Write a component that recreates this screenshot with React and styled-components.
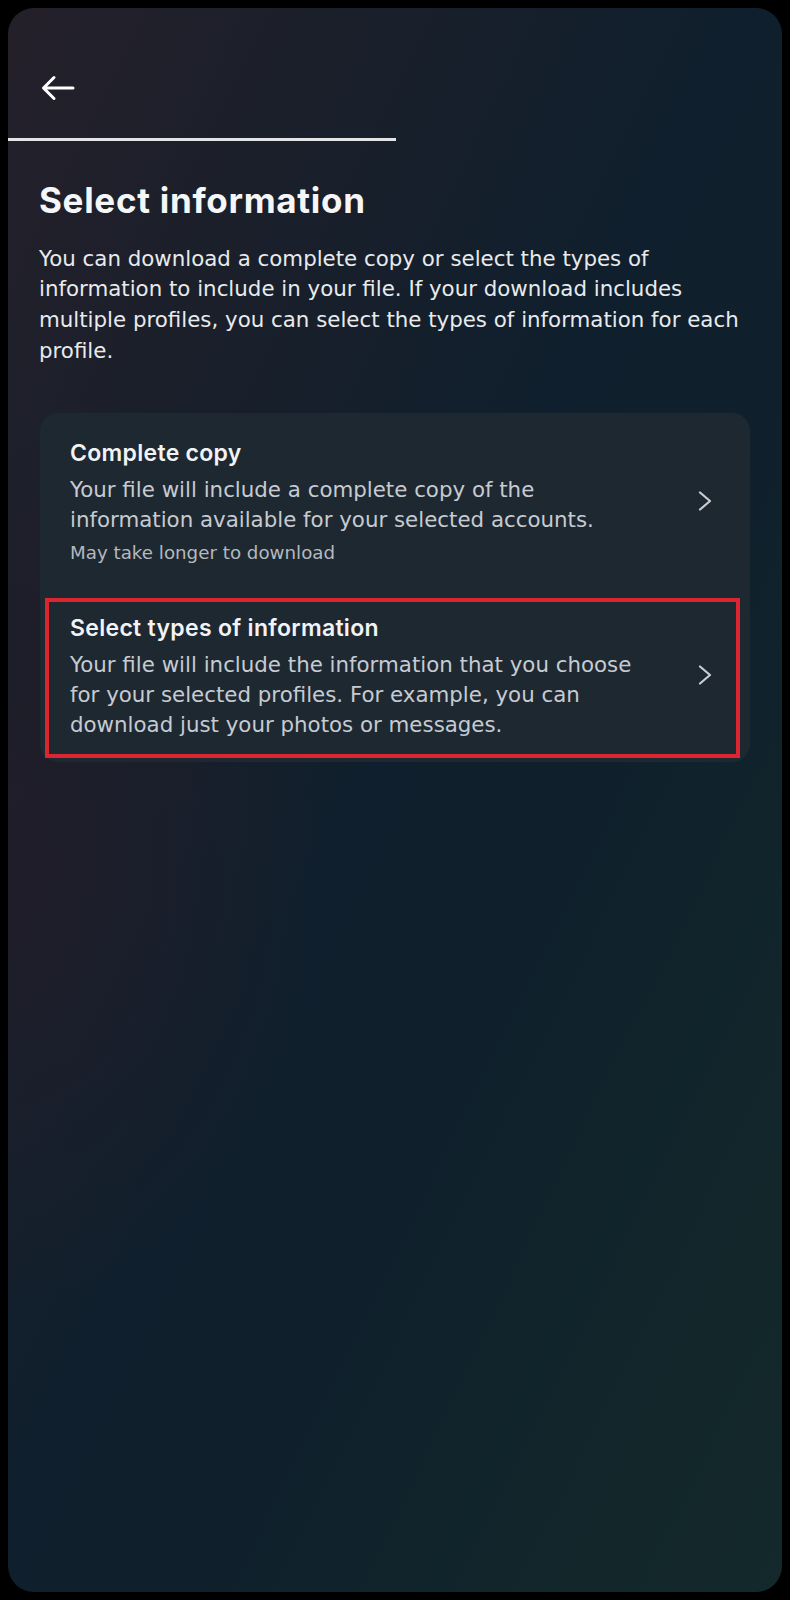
import React from 'react'
import styled, { createGlobalStyle } from 'styled-components'

const GlobalStyle = createGlobalStyle`
  html, body {
    margin: 0;
    padding: 0;
    background: #000;
  }
  body {
    font-family: "DejaVu Sans", Inter, sans-serif;
    -webkit-font-smoothing: antialiased;
  }
  * { box-sizing: border-box; }
`

const options = [
  {
    title: 'Complete copy',
    text: 'Your file will include a complete copy of the information available for your selected accounts.',
    note: 'May take longer to download',
  },
  {
    title: 'Select types of information',
    text: 'Your file will include the information that you choose for your selected profiles. For example, you can download just your photos or messages.',
    marked: true,
  },
]

function BackArrow() {
  return (
    <svg width="34" height="26" viewBox="0 0 34 26" fill="none">
      <path d="M32 13H3M13 2.5L2.5 13L13 23.5" stroke="#fff" strokeWidth="3" strokeLinecap="round" strokeLinejoin="round" />
    </svg>
  )
}

function Chevron() {
  return (
    <svg width="14" height="20" viewBox="0 0 14 20" fill="none">
      <path d="M2 1.5L12 10L2 18.5" stroke="#c9ced3" strokeWidth="2.2" strokeLinecap="round" strokeLinejoin="round" />
    </svg>
  )
}

export default function App() {
  return (
    <Screen>
      <GlobalStyle />
      <Panel>
        <Header>
          <BackButton aria-label="Back">
            <BackArrow />
          </BackButton>
        </Header>
        <TabLine />
        <Content>
          <Title>Select information</Title>
          <Intro>
            You can download a complete copy or select the types of information to include in your file. If your download includes multiple profiles, you can select the types of information for each profile.
          </Intro>
          <OptionCard>
            {options.map(o => (
              <Option key={o.title} $marked={o.marked}>
                <OptionText>
                  <OptionTitle>{o.title}</OptionTitle>
                  <OptionDesc>{o.text}</OptionDesc>
                  {o.note && <OptionNote>{o.note}</OptionNote>}
                </OptionText>
                <Chevron />
              </Option>
            ))}
          </OptionCard>
        </Content>
      </Panel>
    </Screen>
  )
}

const Screen = styled.div`
  padding: 8px;
  min-height: 100vh;
`

const Panel = styled.div`
  height: 1584px;
  border-radius: 26px;
  overflow: hidden;
  background:
    radial-gradient(ellipse 60% 40% at 0% 55%, rgba(38, 28, 40, 0.55), transparent 70%),
    linear-gradient(to bottom right, #24202a 0%, #181f2b 28%, #101f2d 48%, #0f202c 62%, #11252b 80%, #14292a 100%);
`

const Header = styled.header`
  height: 130px;
  padding: 30px 0 0 33px;
  display: flex;
  align-items: center;
`

const BackButton = styled.button`
  background: none;
  border: 0;
  padding: 0;
  display: flex;
  cursor: pointer;
`

const TabLine = styled.div`
  width: 388px;
  height: 2.5px;
  background: #e2e4e6;
`

const Content = styled.main`
  padding: 39px 31px 0;
`

const Title = styled.h1`
  margin: 0;
  font-family: Inter, "Noto Sans", sans-serif;
  font-size: 35px;
  line-height: 40px;
  font-weight: 700;
  letter-spacing: 0.7px;
  color: #f5f6f7;
`

const Intro = styled.p`
  margin: 24px 0 0;
  font-size: 21.35px;
  line-height: 30.7px;
  color: #e8eaec;
`

const OptionCard = styled.div`
  margin: 47px 1px 0;
  background: #1e2831;
  border-radius: 18px;
`

const Option = styled.div`
  position: relative;
  display: flex;
  align-items: center;
  padding: 22px 38px 22px 30px;

  ${p => p.$marked && `
    &::after {
      content: '';
      position: absolute;
      top: 10px;
      left: 5px;
      right: 10px;
      bottom: 4px;
      border: 4px solid #db2531;
      pointer-events: none;
    }
  `}

  svg {
    flex-shrink: 0;
    margin-left: 53px;
  }
`

const OptionText = styled.div`
  flex: 1;
`

const OptionTitle = styled.div`
  font-family: Inter, "Noto Sans", sans-serif;
  font-size: 23px;
  line-height: 36px;
  font-weight: 600;
  letter-spacing: 0.3px;
  color: #f2f3f5;
`

const OptionDesc = styled.div`
  margin-top: 4px;
  font-size: 21.35px;
  line-height: 30px;
  color: #c6cbd1;
`

const OptionNote = styled.div`
  margin-top: 5px;
  font-size: 18.25px;
  line-height: 26px;
  color: #b3b9bf;
`
